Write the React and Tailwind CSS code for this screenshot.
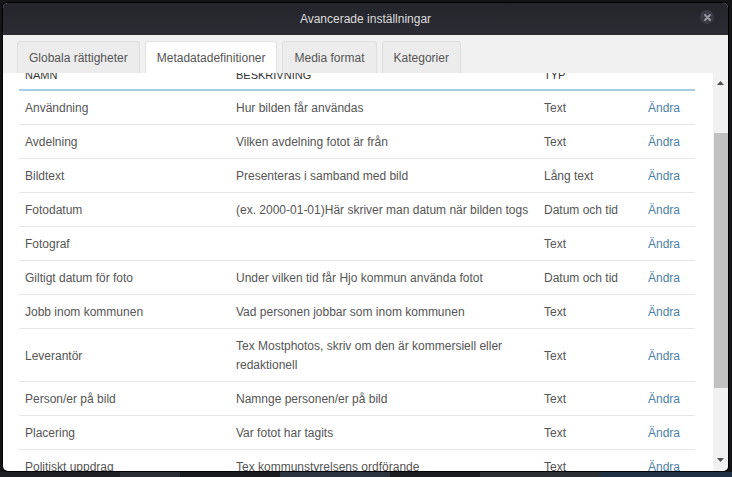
import React from "react";

const rows = [
  ["Användning", "Hur bilden får användas", "Text"],
  ["Avdelning", "Vilken avdelning fotot är från", "Text"],
  ["Bildtext", "Presenteras i samband med bild", "Lång text"],
  ["Fotodatum", "(ex. 2000-01-01)Här skriver man datum när bilden togs", "Datum och tid"],
  ["Fotograf", "", "Text"],
  ["Giltigt datum för foto", "Under vilken tid får Hjo kommun använda fotot", "Datum och tid"],
  ["Jobb inom kommunen", "Vad personen jobbar som inom kommunen", "Text"],
  ["Leverantör", "Tex Mostphotos, skriv om den är kommersiell eller redaktionell", "Text"],
  ["Person/er på bild", "Namnge personen/er på bild", "Text"],
  ["Placering", "Var fotot har tagits", "Text"],
  ["Politiskt uppdrag", "Tex kommunstyrelsens ordförande", "Text"],
];

const tabs = ["Globala rättigheter", "Metadatadefinitioner", "Media format", "Kategorier"];

export default function App() {
  return (
    <div
      className="w-[732px] h-[477px] bg-[#141416] flex flex-col overflow-hidden"
      style={{ fontFamily: '"Liberation Sans", Arial, sans-serif' }}
    >
      <div className="ml-[3px] mt-[3px] w-[725px] h-[468px] rounded-[5px] bg-white flex flex-col overflow-hidden shadow-[0_0_0_1px_#000]">
        {/* Header */}
        <div className="h-[32px] shrink-0 flex items-center justify-center relative bg-gradient-to-b from-[#24242b] to-[#2c2c34]">
          <span className="text-[12px] text-[#dcdcdc]">Avancerade inställningar</span>
          <div className="absolute right-[14px] top-[7px] w-[14px] h-[14px] rounded-full bg-[#3c3c46] flex items-center justify-center">
            <svg width="7" height="7" viewBox="0 0 7 7">
              <path d="M1 1L6 6M6 1L1 6" stroke="#9a9aa2" strokeWidth="1.8" strokeLinecap="round" />
            </svg>
          </div>
        </div>
        {/* Tabs */}
        <div className="h-[38px] shrink-0 bg-[#f1f1f1] flex items-end pl-[14px] gap-[5px]">
          {tabs.map((t, i) => (
            <div
              key={t}
              className={
                "h-[32px] px-[11px] flex items-center rounded-t-[3px] border border-b-0 text-[12px] text-[#555] " +
                (i === 1 ? "bg-white border-[#e2e2e2]" : "bg-[#ececec] border-[#dedede]")
              }
            >
              {t}
            </div>
          ))}
        </div>
        {/* Body */}
        <div className="flex-1 flex min-h-0">
          <div className="flex-1 overflow-hidden pl-[16px] pr-[18px]">
            <div className="-mt-[14px] w-[676px]">
              <div className="grid grid-cols-[211px_308px_104px_53px] border-b-2 border-[#a9cce6] text-[11px] uppercase text-[#333]">
                <div className="pl-[6px] pt-[7px] pb-[5px] leading-[18px]">Namn</div>
                <div className="pl-[6px] pt-[7px] pb-[5px] leading-[18px]">Beskrivning</div>
                <div className="pl-[6px] pt-[7px] pb-[5px] leading-[18px]">Typ</div>
                <div></div>
              </div>
              {rows.map((r) => (
                <div
                  key={r[0]}
                  className="grid grid-cols-[211px_308px_104px_53px] border-b border-[#e5e5e5] text-[12px] text-[#555] leading-[19px]"
                >
                  <div className="pl-[6px] pt-[8px] pb-[6px] flex items-center">{r[0]}</div>
                  <div className="pl-[6px] pr-[6px] pt-[8px] pb-[6px] flex items-center">{r[1]}</div>
                  <div className="pl-[6px] pt-[8px] pb-[6px] flex items-center">{r[2]}</div>
                  <div className="pl-[6px] pt-[8px] pb-[6px] flex items-center text-[#4b7fa8]">Ändra</div>
                </div>
              ))}
            </div>
          </div>
          {/* Scrollbar */}
          <div className="w-[15px] shrink-0 bg-[#f1f1f1] flex flex-col items-center">
            <div className="h-[17px] w-full flex items-center justify-center pt-[2px]">
              <svg width="7" height="4" viewBox="0 0 7 4">
                <path d="M0 4L3.5 0L7 4Z" fill="#505050" />
              </svg>
            </div>
            <div className="h-[43px]"></div>
            <div className="w-[14px] ml-[1px] h-[255px] bg-[#c1c1c1]"></div>
            <div className="flex-1"></div>
            <div className="h-[17px] w-full flex items-center justify-center pb-[5px]">
              <svg width="7" height="4" viewBox="0 0 7 4">
                <path d="M0 0L7 0L3.5 4Z" fill="#505050" />
              </svg>
            </div>
          </div>
        </div>
      </div>
      <div className="flex-1 flex mt-[1px]">
        <div className="w-[120px] bg-[#1c1e22]"></div>
        <div className="w-[60px] bg-[#2a2d33]"></div>
        <div className="w-[100px] bg-[#181a1e]"></div>
        <div className="w-[110px] bg-[#2b3340]"></div>
        <div className="w-[90px] bg-[#1a1c20]"></div>
        <div className="w-[120px] bg-[#2c3035]"></div>
        <div className="flex-1 bg-[#203043]"></div>
      </div>
    </div>
  );
}
